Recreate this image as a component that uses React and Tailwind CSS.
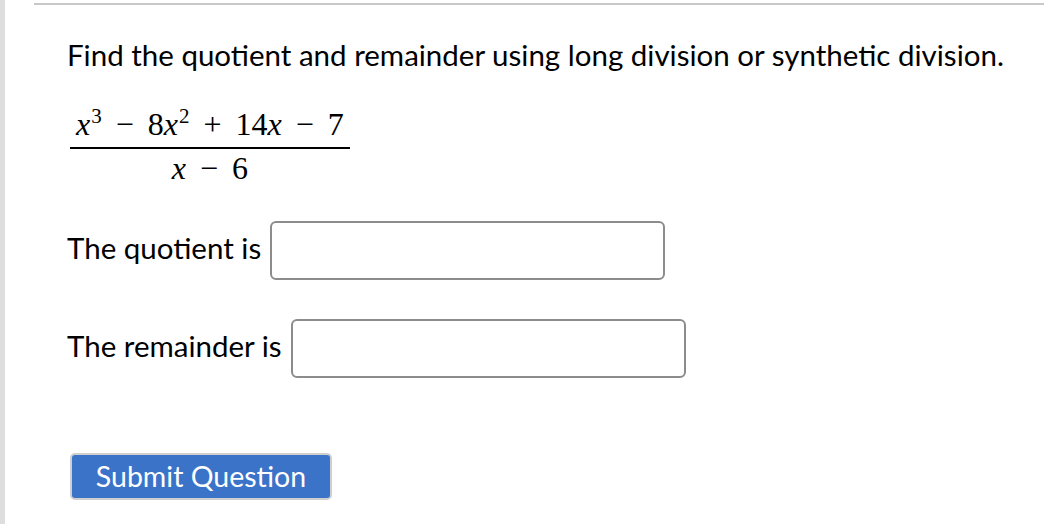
import React from 'react';

const sans = { fontFamily: 'Lato, "Open Sans", sans-serif' };

function Sup({ children }) {
  return <sup className="text-[21px] relative top-[-12px] ml-[1px]">{children}</sup>;
}

function Op({ children }) {
  return <span className="mx-[14px]">{children}</span>;
}

function Frac() {
  return (
    <div className="inline-flex flex-col items-stretch font-['Liberation_Serif',serif] text-[32px] leading-none text-black">
      <div className="px-[6px] pb-[7px] text-center whitespace-nowrap">
        <i>x</i>
        <Sup>3</Sup>
        <Op>−</Op>8<i>x</i>
        <Sup>2</Sup>
        <Op>+</Op>14<i>x</i>
        <Op>−</Op>7
      </div>
      <div className="h-[2px] bg-black" />
      <div className="pt-[3px] text-center whitespace-nowrap">
        <i>x</i>
        <Op>−</Op>6
      </div>
    </div>
  );
}

function Field({ label }) {
  return (
    <div className="flex items-center gap-[9px]">
      <span className="-mt-[4px]">{label}</span>
      <div className="w-[395px] h-[59px] rounded-[6px] border-2 border-[#8c8c8c] bg-white" />
    </div>
  );
}

export default function App() {
  return (
    <div className="flex w-[1044px] h-[524px] bg-white overflow-hidden" style={sans}>
      <div className="w-[5px] shrink-0 bg-[#dedede]" />
      <div className="flex-1 ml-[29px] mt-[3px] border-t-2 border-[#c8c8c8]">
        <div className="pl-[33px] pt-[32px] text-[29.5px] text-black">
          <p className="leading-[36px]">Find the quotient and remainder using long division or synthetic division.</p>
          <div className="flex mt-[35px] ml-[3px]">
            <Frac />
          </div>
          <div className="mt-[37px] flex flex-col gap-[39px]">
            <Field label="The quotient is" />
            <Field label="The remainder is" />
          </div>
          <button className="mt-[75px] ml-[3px] w-[262px] h-[47px] rounded-[5px] border-2 border-[#cfcfcf] bg-[#3b73c9] text-white text-[28.5px] leading-none">
            Submit Question
          </button>
        </div>
      </div>
    </div>
  );
}
